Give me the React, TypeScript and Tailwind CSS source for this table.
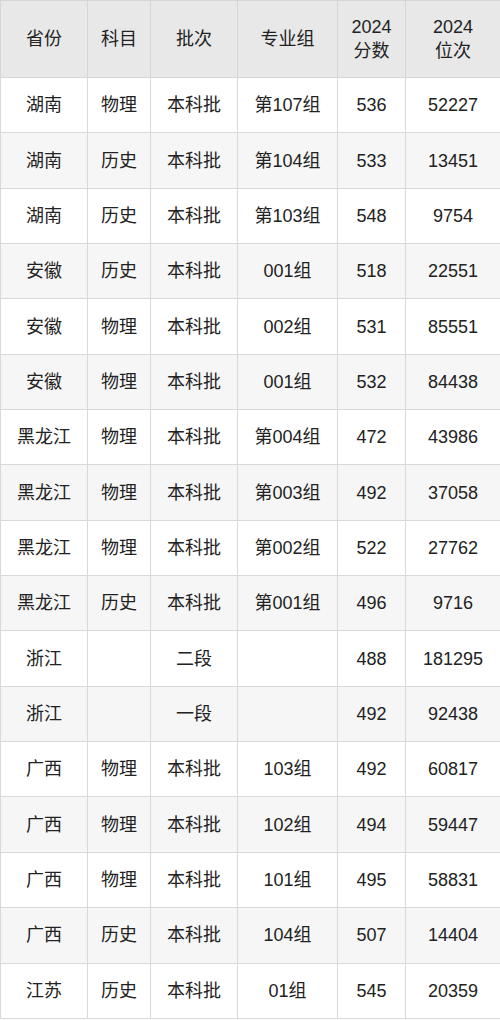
const rows: string[][] = [
  ['湖南', '物理', '本科批', '第107组', '536', '52227'],
  ['湖南', '历史', '本科批', '第104组', '533', '13451'],
  ['湖南', '历史', '本科批', '第103组', '548', '9754'],
  ['安徽', '历史', '本科批', '001组', '518', '22551'],
  ['安徽', '物理', '本科批', '002组', '531', '85551'],
  ['安徽', '物理', '本科批', '001组', '532', '84438'],
  ['黑龙江', '物理', '本科批', '第004组', '472', '43986'],
  ['黑龙江', '物理', '本科批', '第003组', '492', '37058'],
  ['黑龙江', '物理', '本科批', '第002组', '522', '27762'],
  ['黑龙江', '历史', '本科批', '第001组', '496', '9716'],
  ['浙江', '', '二段', '', '488', '181295'],
  ['浙江', '', '一段', '', '492', '92438'],
  ['广西', '物理', '本科批', '103组', '492', '60817'],
  ['广西', '物理', '本科批', '102组', '494', '59447'],
  ['广西', '物理', '本科批', '101组', '495', '58831'],
  ['广西', '历史', '本科批', '104组', '507', '14404'],
  ['江苏', '历史', '本科批', '01组', '545', '20359'],
];

const widths = ['w-[87px]', 'w-[63px]', 'w-[87px]', 'w-[100px]', 'w-[68px]', 'w-[95px]'];

export default function App() {
  return (
    <div className="w-[500px] h-[1020px] overflow-hidden bg-white text-[#222] font-['Liberation_Sans','Noto_Sans_CJK_SC',sans-serif]">
      <table className="w-[500px] table-fixed border-collapse text-[18px] leading-[24px]">
        <colgroup>
          {widths.map((w, i) => (
            <col key={i} className={w} />
          ))}
        </colgroup>
        <thead>
          <tr className="h-[77px] bg-[#e8e8e8]">
            {['省份', '科目', '批次', '专业组'].map(h => (
              <th key={h} className="border border-[#d6d6d6] font-normal text-center">
                {h}
              </th>
            ))}
            <th className="border border-[#d6d6d6] font-normal text-center">
              2024
              <br />
              分数
            </th>
            <th className="border border-[#d6d6d6] font-normal text-center">
              2024
              <br />
              位次
            </th>
          </tr>
        </thead>
        <tbody>
          {rows.map((r, i) => (
            <tr key={i} className={`h-[55.35px] ${i % 2 === 1 ? 'bg-[#f6f6f6]' : 'bg-white'}`}>
              {r.map((c, j) => (
                <td key={j} className="border border-[#d9d9d9] text-center">
                  {c}
                </td>
              ))}
            </tr>
          ))}
        </tbody>
      </table>
    </div>
  );
}
